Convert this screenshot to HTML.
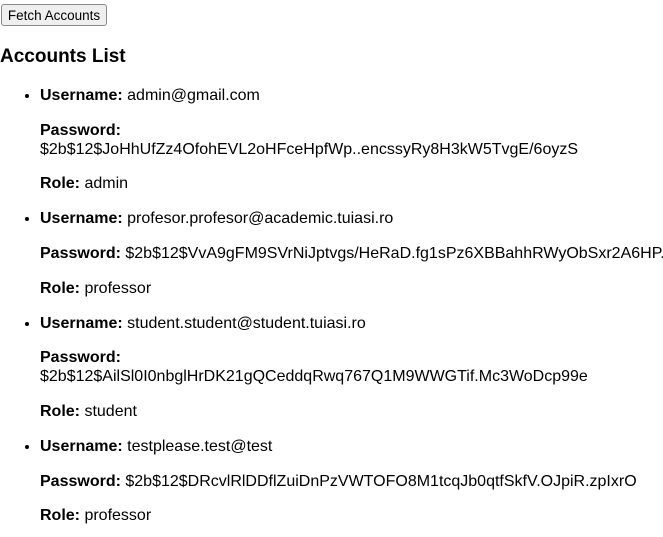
<!DOCTYPE html>
<html><head><style>
body{margin:0;font-family:"Liberation Sans",Arial,sans-serif;font-size:16px;line-height:18.8px;color:#000;background:#fff;width:663px;height:533px;overflow:hidden}
button{margin:4px 0 0 1px;display:block;height:22px;width:106px;font-family:"Liberation Sans",Arial,sans-serif;font-size:13.5px;background:#efefef;border:1px solid #8a8a8a;border-radius:3px;padding:0;color:#000}
h3{font-size:19px;margin:20px 0 19px;line-height:22px}
ul{margin:16px 0;padding-left:40px}
p{margin:16px 0;white-space:nowrap}
</style></head><body>
<button>Fetch Accounts</button>
<h3>Accounts List</h3>
<ul>
<li><p><b>Username:</b> admin@gmail.com</p><p><b>Password:</b><br>$2b$12$JoHhUfZz4OfohEVL2oHFceHpfWp..encssyRy8H3kW5TvgE/6oyzS</p><p><b>Role:</b> admin</p></li>
<li><p><b>Username:</b> profesor.profesor@academic.tuiasi.ro</p><p><b>Password:</b> $2b$12$VvA9gFM9SVrNiJptvgs/HeRaD.fg1sPz6XBBahhRWyObSxr2A6HP.</p><p><b>Role:</b> professor</p></li>
<li><p><b>Username:</b> student.student@student.tuiasi.ro</p><p><b>Password:</b><br>$2b$12$AilSl0I0nbglHrDK21gQCeddqRwq767Q1M9WWGTif.Mc3WoDcp99e</p><p><b>Role:</b> student</p></li>
<li><p><b>Username:</b> testplease.test@test</p><p><b>Password:</b> $2b$12$DRcvlRlDDflZuiDnPzVWTOFO8M1tcqJb0qtfSkfV.OJpiR.zpIxrO</p><p><b>Role:</b> professor</p></li>
</ul>
</body></html>
